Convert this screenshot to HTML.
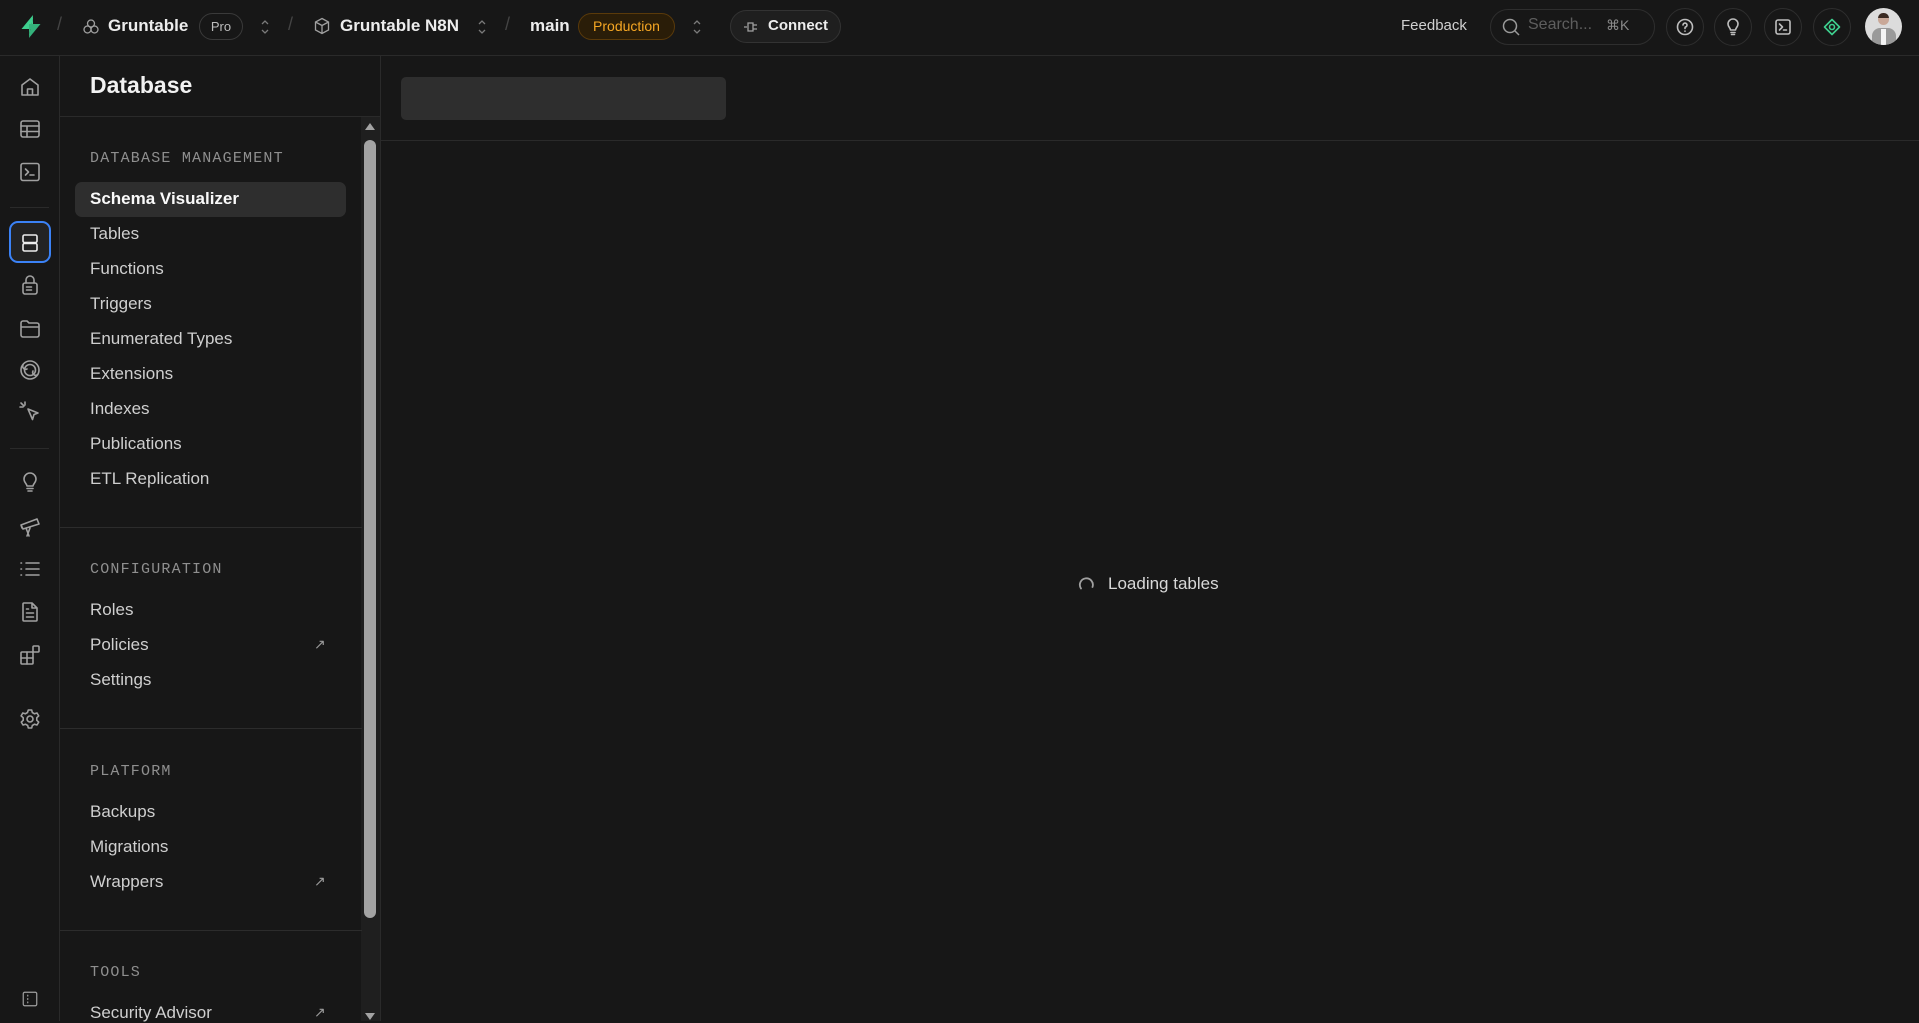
<!DOCTYPE html>
<html><head><meta charset="utf-8"><style>
*{box-sizing:border-box;margin:0;padding:0}
body{width:1919px;height:1021px;background:#171717;font-family:"Liberation Sans",sans-serif;color:#ededed;position:relative;overflow:hidden}
.a{position:absolute}
.t{white-space:nowrap}
svg{display:block}
.ic{position:absolute;left:18px;width:24px;height:24px}
.ic svg{width:24px;height:24px;fill:none;stroke:#a0a0a0;stroke-width:1.6;stroke-linecap:round;stroke-linejoin:round}
.nav{position:absolute;left:90px;font-size:17px;color:#cfcfcf;white-space:nowrap}
.sec{position:absolute;left:90px;font-family:"Liberation Mono",monospace;font-size:15px;color:#8f8f8f;letter-spacing:1.2px}
.hr{position:absolute;left:60px;width:302px;height:1px;background:#2c2c2c}
.cb{position:absolute;top:8px;width:38px;height:38px;border:1px solid #2e2e2e;border-radius:50%}
.cb svg{position:absolute;left:9px;top:9px;width:18px;height:18px;fill:none;stroke:#bdbdbd;stroke-width:1.6;stroke-linecap:round;stroke-linejoin:round}
.ext{position:absolute;left:314px;font-size:14px;color:#9a9a9a}
</style></head><body>
<!-- top bar -->
<div class="a" style="left:0;top:0;width:1919px;height:56px;border-bottom:1px solid #2a2a2a"></div>
<svg class="a" style="left:19px;top:14px" width="24" height="25" viewBox="0 0 24 25"><path d="M14 1L2.5 15H12z" fill="#3ecf8e"/><path d="M14 1v14H12z" fill="#3ecf8e"/><path d="M10 24L21.5 10H12z" fill="#34b27b"/><path d="M10 24V10h2z" fill="#34b27b"/></svg>
<div class="a t" style="left:57px;top:14px;color:#444;font-size:18px">/</div>
<svg class="a" style="left:82px;top:18px" width="18" height="18" viewBox="0 0 18 18" fill="none" stroke="#a0a0a0" stroke-width="1.3"><circle cx="9" cy="5.5" r="3.5"/><circle cx="5.5" cy="11.5" r="3.5"/><circle cx="12.5" cy="11.5" r="3.5"/></svg>
<div class="a t" style="left:108px;top:16px;font-size:17px;font-weight:bold;color:#ededed">Gruntable</div>
<div class="a t" style="left:199px;top:13px;width:44px;height:27px;border:1px solid #3a3a3a;border-radius:14px;font-size:13px;color:#bdbdbd;text-align:center;line-height:25px">Pro</div>
<svg class="a" style="left:258px;top:17px" width="14" height="20" viewBox="0 0 14 20" fill="none" stroke="#7a7a7a" stroke-width="1.3"><path d="M4 7l3-3 3 3M4 13l3 3 3-3"/></svg>
<div class="a t" style="left:288px;top:14px;color:#444;font-size:18px">/</div>
<svg class="a" style="left:313px;top:17px" width="18" height="18" viewBox="0 0 18 18" fill="none" stroke="#a0a0a0" stroke-width="1.3"><path d="M9 1.5l6.5 3.5v8L9 16.5 2.5 13V5z M2.5 5L9 8.5 15.5 5 M9 8.5v8"/></svg>
<div class="a t" style="left:340px;top:16px;font-size:17px;font-weight:bold;color:#ededed">Gruntable N8N</div>
<svg class="a" style="left:475px;top:17px" width="14" height="20" viewBox="0 0 14 20" fill="none" stroke="#7a7a7a" stroke-width="1.3"><path d="M4 7l3-3 3 3M4 13l3 3 3-3"/></svg>
<div class="a t" style="left:505px;top:14px;color:#444;font-size:18px">/</div>
<div class="a t" style="left:530px;top:16px;font-size:17px;font-weight:bold;color:#ededed">main</div>
<div class="a t" style="left:578px;top:13px;width:97px;height:27px;border:1px solid #5a3a0a;background:#2a1d08;border-radius:14px;font-size:14px;color:#f5a623;text-align:center;line-height:25px">Production</div>
<svg class="a" style="left:690px;top:17px" width="14" height="20" viewBox="0 0 14 20" fill="none" stroke="#7a7a7a" stroke-width="1.3"><path d="M4 7l3-3 3 3M4 13l3 3 3-3"/></svg>
<div class="a" style="left:730px;top:10px;width:111px;height:33px;border:1px solid #333;background:#1f1f1f;border-radius:17px"></div>
<svg class="a" style="left:743px;top:19px" width="16" height="16" viewBox="0 0 16 16" fill="none" stroke="#a0a0a0" stroke-width="1.3"><path d="M1 8h3M5 4h5v8H5z M10 6h4M10 10h4"/></svg>
<div class="a t" style="left:768px;top:17px;font-size:15px;font-weight:bold;color:#ededed">Connect</div>

<div class="a t" style="left:1401px;top:17px;font-size:15px;color:#d0d0d0">Feedback</div>
<div class="a" style="left:1490px;top:9px;width:165px;height:36px;border:1px solid #2e2e2e;border-radius:18px"></div>
<svg class="a" style="left:1501px;top:17px" width="20" height="20" viewBox="0 0 20 20" fill="none" stroke="#9a9a9a" stroke-width="1.5"><circle cx="9" cy="9" r="6.5"/><path d="M14 14l4 4"/></svg>
<div class="a t" style="left:1528px;top:16px;font-size:16px;color:#5e5e5e">Search...</div>
<div class="a t" style="left:1606px;top:17px;font-size:14px;color:#8a8a8a">⌘K</div>
<div class="cb" style="left:1666px"><svg viewBox="0 0 18 18"><circle cx="9" cy="9" r="7.5"/><path d="M7 7a2 2 0 1 1 2.5 2c-.4.2-.5.6-.5 1v.5M9 13v.2"/></svg></div>
<div class="cb" style="left:1714px"><svg viewBox="0 0 18 18"><path d="M6.5 12c0-2-2.5-3-2.5-6a5 5 0 0 1 10 0c0 3-2.5 4-2.5 6zM7 14.5h4M7.5 16.5h3"/></svg></div>
<div class="cb" style="left:1764px"><svg viewBox="0 0 18 18"><rect x="2" y="2" width="14" height="14" rx="2"/><path d="M5.5 6l3 3-3 3M9.5 12h3"/></svg></div>
<div class="cb" style="left:1813px"><svg viewBox="0 0 18 18" style="stroke:#3ecf8e"><path d="M9 1.5L16.5 9 9 16.5 1.5 9z"/><circle cx="9" cy="9" r="2.5"/></svg></div>
<div class="a" style="left:1865px;top:8px;width:37px;height:37px;border-radius:50%;background:#dcdcdc;overflow:hidden"><div class="a" style="left:13px;top:6px;width:11px;height:11px;border-radius:50%;background:#c9a898"></div><div class="a" style="left:13px;top:5px;width:11px;height:5px;border-radius:5px 5px 0 0;background:#3a2a22"></div><div class="a" style="left:7px;top:20px;width:24px;height:20px;border-radius:8px 8px 0 0;background:#9a9a9a"></div><div class="a" style="left:16px;top:21px;width:5px;height:18px;background:#f4f4f4"></div></div>

<!-- icon rail -->
<div class="a" style="left:59px;top:56px;width:1px;height:965px;background:#2a2a2a"></div>
<div class="a" style="left:10px;top:207px;width:39px;height:1px;background:#2a2a2a"></div>
<div class="a" style="left:10px;top:448px;width:39px;height:1px;background:#2a2a2a"></div>
<div class="a" style="left:9px;top:221px;width:42px;height:42px;border:2px solid #3b82f6;border-radius:9px;background:#232323"></div>
<div class="ic" style="top:75px"><svg viewBox="0 0 24 24"><path d="M4 10l8-6 8 6v10H4z M9.5 20v-6h5v6"/></svg></div>
<div class="ic" style="top:117px"><svg viewBox="0 0 24 24"><rect x="3" y="4" width="18" height="16" rx="2"/><path d="M3 9h18M3 14.5h18M9 9v11"/></svg></div>
<div class="ic" style="top:160px"><svg viewBox="0 0 24 24"><rect x="3" y="3.5" width="18" height="17" rx="2"/><path d="M7.5 9l3 3-3 3M12 15h4"/></svg></div>
<div class="ic" style="top:231px"><svg viewBox="0 0 24 24" style="stroke:#ededed"><rect x="5" y="4" width="14" height="7.5" rx="1.5"/><rect x="5" y="12.5" width="14" height="7.5" rx="1.5"/></svg></div>
<div class="ic" style="top:273px"><svg viewBox="0 0 24 24"><rect x="5" y="10" width="14" height="11" rx="2"/><path d="M8 10V7a4 4 0 0 1 8 0v3M8.5 14h5M8.5 17h5"/></svg></div>
<div class="ic" style="top:316px"><svg viewBox="0 0 24 24"><path d="M3 19V7a2 2 0 0 1 2-2h4l2 2h8a2 2 0 0 1 2 2v10a2 2 0 0 1-2 2H5a2 2 0 0 1-2-2zM3 11h18"/></svg></div>
<div class="ic" style="top:358px"><svg viewBox="0 0 24 24"><circle cx="12" cy="12" r="9"/><circle cx="12" cy="12" r="5.5"/><path d="M5 7a3 3 0 0 0 4 4M15 13a3 3 0 0 0 4 4"/></svg></div>
<div class="ic" style="top:400px"><svg viewBox="0 0 24 24"><path d="M10 9l10 4-4 1.5-1.5 5z M3 3l3 3M7 2v3M2 7h3"/></svg></div>
<div class="ic" style="top:470px"><svg viewBox="0 0 24 24"><path d="M9 16c0-2-3-3.5-3-7a6 6 0 0 1 12 0c0 3.5-3 5-3 7zM9 18.5h6M10 21h4"/></svg></div>
<div class="ic" style="top:515px"><svg viewBox="0 0 24 24"><path d="M3 10l16-6 2 5-16 5zM8 13l3 8M12 13l-3 8M3 10l1 3"/></svg></div>
<div class="ic" style="top:557px"><svg viewBox="0 0 24 24"><path d="M8 6h13M8 12h13M8 18h13M3 6h.5M3 12h.5M3 18h.5"/></svg></div>
<div class="ic" style="top:600px"><svg viewBox="0 0 24 24"><path d="M5 4a1 1 0 0 1 1-1h8l5 5v12a1 1 0 0 1-1 1H6a1 1 0 0 1-1-1zM14 3v5h5M8.5 9h2M8.5 13h7M8.5 17h7"/></svg></div>
<div class="ic" style="top:643px"><svg viewBox="0 0 24 24"><rect x="3" y="9" width="12" height="12" rx="1"/><path d="M3 15h12M9 9v12"/><rect x="15" y="3" width="6" height="6" rx="1"/></svg></div>
<div class="ic" style="top:707px"><svg viewBox="0 0 24 24"><circle cx="12" cy="12" r="3"/><path d="M10.3 3h3.4l.6 2.5 2.2 1.3 2.5-.8 1.7 2.9-1.9 1.8v2.6l1.9 1.8-1.7 2.9-2.5-.8-2.2 1.3-.6 2.5h-3.4l-.6-2.5-2.2-1.3-2.5.8-1.7-2.9 1.9-1.8v-2.6L3.1 8.9l1.7-2.9 2.5.8 2.2-1.3z"/></svg></div>
<div class="ic" style="top:990px;left:21px;width:18px;height:18px"><svg viewBox="0 0 24 24" style="width:18px;height:18px"><rect x="3" y="3" width="18" height="18" rx="2"/><path d="M9 7v1M9 11.5v1M9 16v1"/></svg></div>

<!-- sidebar -->
<div class="a" style="left:380px;top:56px;width:1px;height:965px;background:#2a2a2a"></div>
<div class="a t" style="left:90px;top:72px;font-size:23px;font-weight:bold;color:#f2f2f2">Database</div>
<div class="a" style="left:60px;top:116px;width:320px;height:1px;background:#2a2a2a"></div>
<div class="a" style="left:361px;top:117px;width:19px;height:904px;background:#1f1f1f"></div>
<div class="a" style="left:364px;top:140px;width:12px;height:778px;border-radius:6px;background:#a3a3a3"></div>
<svg class="a" style="left:364px;top:122px" width="12" height="9"><path d="M6 1l5 7H1z" fill="#a3a3a3"/></svg>
<svg class="a" style="left:364px;top:1012px" width="12" height="9"><path d="M6 8l5-7H1z" fill="#a3a3a3"/></svg>

<div class="sec" style="top:150px">DATABASE MANAGEMENT</div>
<div class="a" style="left:75px;top:182px;width:271px;height:35px;border-radius:7px;background:#2e2e2e"></div>
<div class="nav" style="top:189px;color:#fafafa;font-weight:bold">Schema Visualizer</div>
<div class="nav" style="top:224px">Tables</div>
<div class="nav" style="top:259px">Functions</div>
<div class="nav" style="top:294px">Triggers</div>
<div class="nav" style="top:329px">Enumerated Types</div>
<div class="nav" style="top:364px">Extensions</div>
<div class="nav" style="top:399px">Indexes</div>
<div class="nav" style="top:434px">Publications</div>
<div class="nav" style="top:469px">ETL Replication</div>
<div class="hr" style="top:527px"></div>
<div class="sec" style="top:561px">CONFIGURATION</div>
<div class="nav" style="top:600px">Roles</div>
<div class="nav" style="top:635px">Policies</div><div class="ext" style="top:636px">↗</div>
<div class="nav" style="top:670px">Settings</div>
<div class="hr" style="top:728px"></div>
<div class="sec" style="top:763px">PLATFORM</div>
<div class="nav" style="top:802px">Backups</div>
<div class="nav" style="top:837px">Migrations</div>
<div class="nav" style="top:872px">Wrappers</div><div class="ext" style="top:873px">↗</div>
<div class="hr" style="top:930px"></div>
<div class="sec" style="top:964px">TOOLS</div>
<div class="nav" style="top:1003px">Security Advisor</div><div class="ext" style="top:1004px">↗</div>

<!-- main -->
<div class="a" style="left:401px;top:77px;width:325px;height:43px;border-radius:5px;background:#2e2e2e"></div>
<div class="a" style="left:381px;top:140px;width:1538px;height:1px;background:#2a2a2a"></div>
<svg class="a" style="left:1078px;top:576px" width="17" height="17" viewBox="0 0 17 17" fill="none" stroke="#a0a0a0" stroke-width="1.8" stroke-linecap="round"><path d="M3 12.5A6.5 6.5 0 1 1 14.5 11"/></svg>
<div class="a t" style="left:1108px;top:574px;font-size:17px;color:#d8d8d8">Loading tables</div>
</body></html>
